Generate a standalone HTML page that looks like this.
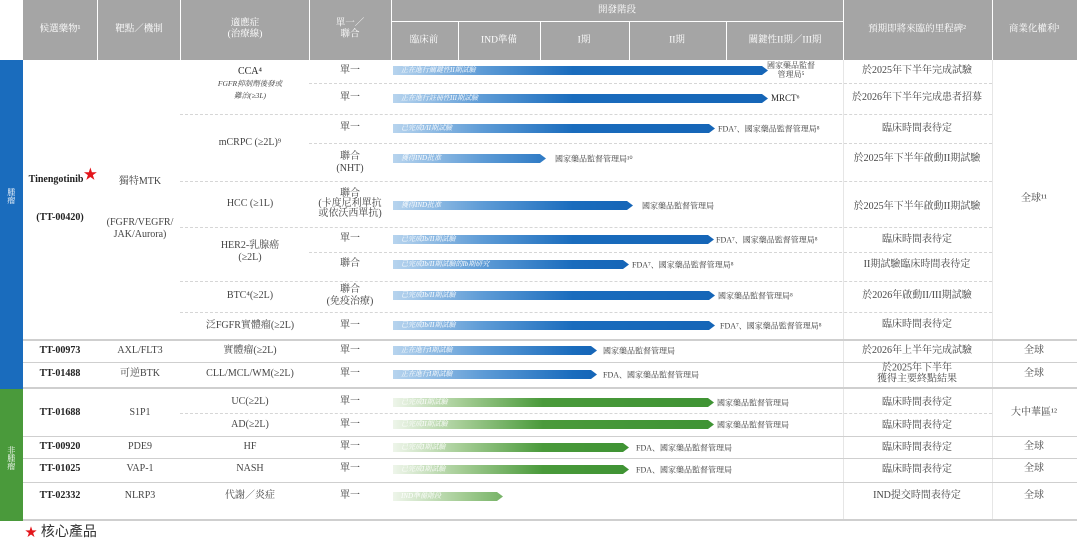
<!DOCTYPE html>
<html><head><meta charset="utf-8"><style>
*{margin:0;padding:0;box-sizing:border-box}
body{width:1080px;height:543px;background:#fff;position:relative;overflow:hidden;font-family:"Liberation Serif","Noto Serif CJK SC","Noto Sans CJK TC",serif;color:#444;font-size:10px}
.a{position:absolute}
.t{position:absolute;transform:translate(-50%,-50%);white-space:nowrap;text-align:center;line-height:1.2}
.l{position:absolute;transform:translateY(-50%);white-space:nowrap;font-size:8px;color:#444}
.h{color:#fff;font-size:9.5px}
.hl{position:absolute;top:0;width:1px;height:60px;background:#fff}
.bar{position:absolute;left:393px;height:9px;clip-path:polygon(0 0,calc(100% - 6px) 0,100% 50%,calc(100% - 6px) 100%,0 100%);font-size:7px;color:#fff;font-style:italic;line-height:9px;padding-left:8px;white-space:nowrap;overflow:hidden}
.bl{background:linear-gradient(90deg,#b7d4ee 0,#5d9bd6 90px,#1a6cbd 180px,#1565b7 100%)}
.gr{background:linear-gradient(90deg,#eef5ea 0,#a3cc93 70px,#4a9a3b 150px,#3f9334 100%)}
.d{position:absolute;height:0;border-top:1px dashed #d6d6d6}
.s{position:absolute;left:23px;width:1054px;height:0;border-top:1px solid #cfcfcf}
.S{position:absolute;left:23px;width:1054px;height:2px;background:#cfcfcf}
b{color:#222}
</style></head><body>
<div class="a" style="left:23px;top:0;width:1054px;height:60px;background:#a5a5a5"></div>
<div class="hl" style="left:97px"></div><div class="hl" style="left:180px"></div><div class="hl" style="left:309px"></div><div class="hl" style="left:391px"></div><div class="hl" style="left:843px"></div><div class="hl" style="left:992px"></div>
<div class="a" style="left:391px;top:21px;width:452px;height:1px;background:#fff"></div>
<div class="a" style="left:458px;top:21px;width:1px;height:39px;background:#fff"></div>
<div class="a" style="left:540px;top:21px;width:1px;height:39px;background:#fff"></div>
<div class="a" style="left:629px;top:21px;width:1px;height:39px;background:#fff"></div>
<div class="a" style="left:726px;top:21px;width:1px;height:39px;background:#fff"></div>
<div class="t h" style="left:60px;top:30px">候選藥物¹</div>
<div class="t h" style="left:139px;top:30px">靶點／機制</div>
<div class="t h" style="left:245px;top:30px">適應症<br>(治療線)</div>
<div class="t h" style="left:350px;top:30px">單一／<br>聯合</div>
<div class="t h" style="left:617px;top:11px">開發階段</div>
<div class="t h" style="left:424px;top:41px">臨床前</div>
<div class="t h" style="left:499px;top:41px">IND準備</div>
<div class="t h" style="left:584px;top:41px">I期</div>
<div class="t h" style="left:677px;top:41px">II期</div>
<div class="t h" style="left:785px;top:41px">關鍵性II期／III期</div>
<div class="t h" style="left:917px;top:30px">預期即將來臨的里程碑²</div>
<div class="t h" style="left:1034px;top:30px">商業化權利³</div>
<div class="a" style="left:0;top:60px;width:23px;height:329px;background:#1a6cbd"></div>
<div class="a" style="left:0;top:389px;width:23px;height:132px;background:#4a9a3b"></div>
<div class="t" style="left:11px;top:196px;color:#fff;font-size:8px;writing-mode:vertical-rl">腫瘤</div>
<div class="t" style="left:11px;top:458px;color:#fff;font-size:8px;writing-mode:vertical-rl">非腫瘤</div>
<div class="a" style="left:843px;top:60px;width:1px;height:460px;background:#e6e6e6"></div>
<div class="a" style="left:992px;top:60px;width:1px;height:460px;background:#e6e6e6"></div>
<div class="d" style="left:309px;width:683px;top:83px"></div>
<div class="d" style="left:180px;width:812px;top:114px"></div>
<div class="d" style="left:309px;width:683px;top:143px"></div>
<div class="d" style="left:180px;width:812px;top:181px"></div>
<div class="d" style="left:180px;width:812px;top:227px"></div>
<div class="d" style="left:309px;width:683px;top:252px"></div>
<div class="d" style="left:180px;width:812px;top:281px"></div>
<div class="d" style="left:180px;width:812px;top:312px"></div>
<div class="S" style="top:339px"></div>
<div class="s" style="top:362px"></div>
<div class="S" style="top:387px"></div>
<div class="d" style="left:180px;width:812px;top:413px"></div>
<div class="s" style="top:436px"></div>
<div class="s" style="top:458px"></div>
<div class="s" style="top:482px"></div>
<div class="S" style="top:519px"></div>
<div class="t" style="left:63px;top:177px;font-size:10px"><b>Tinengotinib</b><span style="color:#e3151b;font-size:14px;vertical-align:3px">★</span></div>
<div class="t" style="left:60px;top:218px"><b>(TT-00420)</b></div>
<div class="t" style="left:140px;top:182px">獨特MTK</div>
<div class="t" style="left:140px;top:229px">(FGFR/VEGFR/<br>JAK/Aurora)</div>
<div class="t" style="left:250px;top:84px"><span style="color:#222">CCA⁴</span><br><i style="font-size:7.5px;line-height:1">FGFR抑制劑後發或<br>難治(≥3L)</i></div>
<div class="t" style="left:250px;top:143px">mCRPC (≥2L)⁹</div>
<div class="t" style="left:250px;top:204px">HCC (≥1L)</div>
<div class="t" style="left:250px;top:252px">HER2-乳腺癌<br>(≥2L)</div>
<div class="t" style="left:250px;top:296px">BTC⁴(≥2L)</div>
<div class="t" style="left:250px;top:326px">泛FGFR實體瘤(≥2L)</div>
<div class="t" style="left:350px;top:71px">單一</div>
<div class="t" style="left:350px;top:98px">單一</div>
<div class="t" style="left:350px;top:128px">單一</div>
<div class="t" style="left:350px;top:163px">聯合<br>(NHT)</div>
<div class="t" style="left:350px;top:204px;line-height:1">聯合<br>(卡度尼利單抗<br>或依沃西單抗)</div>
<div class="t" style="left:350px;top:239px">單一</div>
<div class="t" style="left:350px;top:264px">聯合</div>
<div class="t" style="left:350px;top:296px">聯合<br>(免疫治療)</div>
<div class="t" style="left:350px;top:326px">單一</div>
<div class="t" style="left:60px;top:351px"><b>TT-00973</b></div><div class="t" style="left:140px;top:351px">AXL/FLT3</div><div class="t" style="left:250px;top:351px">實體瘤(≥2L)</div><div class="t" style="left:350px;top:351px">單一</div>
<div class="t" style="left:60px;top:374px"><b>TT-01488</b></div><div class="t" style="left:140px;top:374px">可逆BTK</div><div class="t" style="left:250px;top:374px">CLL/MCL/WM(≥2L)</div><div class="t" style="left:350px;top:374px">單一</div>
<div class="t" style="left:60px;top:413px"><b>TT-01688</b></div><div class="t" style="left:140px;top:413px">S1P1</div><div class="t" style="left:250px;top:402px">UC(≥2L)</div><div class="t" style="left:250px;top:425px">AD(≥2L)</div><div class="t" style="left:350px;top:402px">單一</div><div class="t" style="left:350px;top:425px">單一</div>
<div class="t" style="left:60px;top:447px"><b>TT-00920</b></div><div class="t" style="left:140px;top:447px">PDE9</div><div class="t" style="left:250px;top:447px">HF</div><div class="t" style="left:350px;top:447px">單一</div>
<div class="t" style="left:60px;top:469px"><b>TT-01025</b></div><div class="t" style="left:140px;top:469px">VAP-1</div><div class="t" style="left:250px;top:469px">NASH</div><div class="t" style="left:350px;top:469px">單一</div>
<div class="t" style="left:60px;top:496px"><b>TT-02332</b></div><div class="t" style="left:140px;top:496px">NLRP3</div><div class="t" style="left:250px;top:496px">代謝／炎症</div><div class="t" style="left:350px;top:496px">單一</div>
<div class="bar bl" style="top:66px;width:375px">正在進行關鍵性II期試驗</div>
<div class="bar bl" style="top:94px;width:375px">正在進行註冊性III期試驗</div>
<div class="bar bl" style="top:124px;width:322px">已完成I/II期試驗</div>
<div class="bar bl" style="top:154px;width:153px">獲得IND批准</div>
<div class="bar bl" style="top:201px;width:240px">獲得IND批准</div>
<div class="bar bl" style="top:235px;width:321px">已完成Ib/II期試驗</div>
<div class="bar bl" style="top:260px;width:236px">已完成Ib/II期試驗的Ib期研究</div>
<div class="bar bl" style="top:291px;width:322px">已完成Ib/II期試驗</div>
<div class="bar bl" style="top:321px;width:322px">已完成Ib/II期試驗</div>
<div class="bar bl" style="top:346px;width:204px">正在進行I期試驗</div>
<div class="bar bl" style="top:370px;width:204px">正在進行I期試驗</div>
<div class="bar gr" style="top:398px;width:321px">已完成II期試驗</div>
<div class="bar gr" style="top:420px;width:321px">已完成II期試驗</div>
<div class="bar gr" style="top:443px;width:236px">已完成I期試驗</div>
<div class="bar gr" style="top:465px;width:236px">已完成I期試驗</div>
<div class="bar gr" style="top:492px;width:110px">IND準備階段</div>
<div class="t" style="left:791px;top:71px;font-size:8px;line-height:1.1">國家藥品監督<br>管理局⁵</div>
<div class="l" style="left:771px;top:98px;font-size:9px;color:#222">MRCT⁶</div>
<div class="l" style="left:718px;top:129px">FDA⁷、國家藥品監督管理局⁸</div>
<div class="l" style="left:555px;top:159px">國家藥品監督管理局¹⁰</div>
<div class="l" style="left:642px;top:206px">國家藥品監督管理局</div>
<div class="l" style="left:716px;top:240px">FDA⁷、國家藥品監督管理局⁸</div>
<div class="l" style="left:632px;top:265px">FDA⁷、國家藥品監督管理局⁸</div>
<div class="l" style="left:718px;top:296px">國家藥品監督管理局⁸</div>
<div class="l" style="left:720px;top:326px">FDA⁷、國家藥品監督管理局⁸</div>
<div class="l" style="left:603px;top:351px">國家藥品監督管理局</div>
<div class="l" style="left:603px;top:375px">FDA、國家藥品監督管理局</div>
<div class="l" style="left:717px;top:403px">國家藥品監督管理局</div>
<div class="l" style="left:717px;top:425px">國家藥品監督管理局</div>
<div class="l" style="left:636px;top:448px">FDA、國家藥品監督管理局</div>
<div class="l" style="left:636px;top:470px">FDA、國家藥品監督管理局</div>
<div class="t" style="left:917px;top:71px">於2025年下半年完成試驗</div>
<div class="t" style="left:917px;top:98px">於2026年下半年完成患者招募</div>
<div class="t" style="left:917px;top:129px">臨床時間表待定</div>
<div class="t" style="left:917px;top:159px">於2025年下半年啟動II期試驗</div>
<div class="t" style="left:917px;top:207px">於2025年下半年啟動II期試驗</div>
<div class="t" style="left:917px;top:240px">臨床時間表待定</div>
<div class="t" style="left:917px;top:265px">II期試驗臨床時間表待定</div>
<div class="t" style="left:917px;top:296px">於2026年啟動II/III期試驗</div>
<div class="t" style="left:917px;top:325px">臨床時間表待定</div>
<div class="t" style="left:917px;top:351px">於2026年上半年完成試驗</div>
<div class="t" style="left:917px;top:374px;line-height:1.05">於2025年下半年<br>獲得主要終點結果</div>
<div class="t" style="left:917px;top:403px">臨床時間表待定</div>
<div class="t" style="left:917px;top:426px">臨床時間表待定</div>
<div class="t" style="left:917px;top:448px">臨床時間表待定</div>
<div class="t" style="left:917px;top:470px">臨床時間表待定</div>
<div class="t" style="left:917px;top:496px">IND提交時間表待定</div>
<div class="t" style="left:1034px;top:199px">全球¹¹</div>
<div class="t" style="left:1034px;top:351px">全球</div>
<div class="t" style="left:1034px;top:374px">全球</div>
<div class="t" style="left:1034px;top:413px">大中華區¹²</div>
<div class="t" style="left:1034px;top:447px">全球</div>
<div class="t" style="left:1034px;top:469px">全球</div>
<div class="t" style="left:1034px;top:496px">全球</div>
<div class="a" style="left:25px;top:521px;font-size:14px;line-height:20px;font-family:'Liberation Sans','Noto Sans CJK TC',sans-serif;color:#333"><span style="color:#e3151b;font-size:12px">★</span> 核心產品</div>
</body></html>
